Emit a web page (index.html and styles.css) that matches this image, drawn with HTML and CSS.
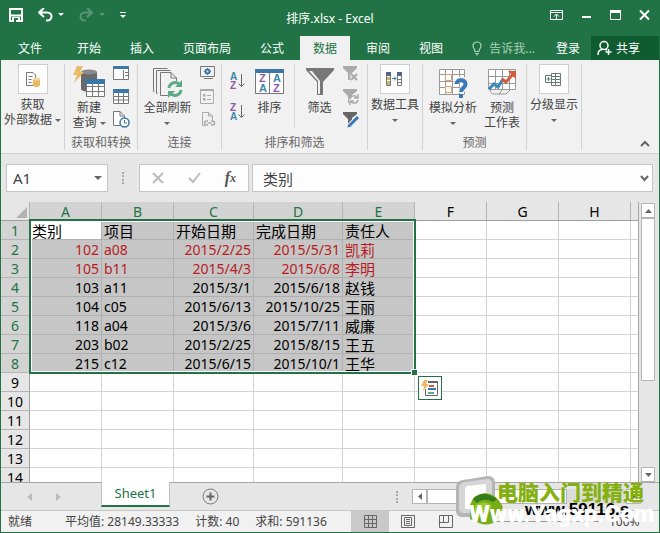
FILE: index.html
```html
<!DOCTYPE html>
<html lang="zh-CN">
<head>
<meta charset="utf-8">
<title>排序.xlsx - Excel</title>
<link rel="stylesheet" href="styles.css">
</head>
<body>
<header class="titlebar">
  <div class="quick">
    <button aria-label="保存"><svg width="14" height="14" viewBox="0 0 14 14"><path d="M1 1h12v12H1zM1 7.500h12M4 13v-3h6v3" fill="none" stroke="#fff" stroke-width="2"/><path d="M5 10h4v2H7v2H5z" fill="#217346"/></svg></button>
    <button aria-label="撤消"><svg width="26" height="14" viewBox="0 0 26 14"><path d="M6 0 1 4.500 6 9M1.500 4.500H9c6 0 6 8 0 8H8" fill="none" stroke="#fff" stroke-width="2"/><path d="M20 5h6l-3 3z" fill="#fff"/></svg></button>
    <button aria-label="恢复" class="dim"><svg width="26" height="14" viewBox="0 0 26 14"><path d="M8 0l5 4.500L8 9M12.500 4.500H6c-6 0-6 8 0 8h1" fill="none" stroke="#fff" stroke-width="2"/><path d="M20 5h6l-3 3z" fill="#fff"/></svg></button>
    <button aria-label="自定义快速访问工具栏"><svg width="6" height="14" viewBox="0 0 6 14"><path d="M0 4h6v1H0zM0 7h6l-3 3z" fill="#fff"/></svg></button>
  </div>
  <h1>排序.xlsx - Excel</h1>
  <div class="winctl">
    <button aria-label="功能区显示选项"><svg width="13" height="12" viewBox="0 0 13 12"><path d="M.5 1.500h12v9H.5zM.5 3.500h12M6.500 10V5M4 7.500 6.500 5 9 7.500" fill="none" stroke="#fff"/></svg></button>
    <button aria-label="最小化"><svg width="11" height="12" viewBox="0 0 11 12"><path d="M1 7h9v2H1z" fill="#fff"/></svg></button>
    <button aria-label="最大化"><svg width="11" height="12" viewBox="0 0 11 12"><path d="M.5 1.500h10v9H.5z" fill="none" stroke="#fff"/><path d="M0 1h11v3H0z" fill="#fff"/></svg></button>
    <button aria-label="关闭"><svg width="11" height="12" viewBox="0 0 11 12"><path d="m1 1.500 9 9m0-9-9 9" stroke="#fff" stroke-width="2"/></svg></button>
  </div>
</header>

<nav class="tabs">
  <button class="file">文件</button>
  <button>开始</button>
  <button>插入</button>
  <button>页面布局</button>
  <button>公式</button>
  <button class="active">数据</button>
  <button>审阅</button>
  <button>视图</button>
  <div class="account">
    <button class="tell"><svg width="10" height="15" viewBox="0 0 10 15"><path d="M3 10.500C3 8 1 7.500 1 4.500 1 2.500 3 1 5 1s4 1.500 4 3.500c0 3-2 3.500-2 6zM3 12.500h4M4 14h2" fill="none" stroke="#a9d2b9" stroke-width="1.200"/></svg>告诉我...</button>
    <button class="login">登录</button>
    <button class="share"><svg width="15" height="16" viewBox="0 0 15 16"><path d="M1 15c0-4 2-5.500 4.500-5.500M11 5.500a4 4 0 1 1-8 0 4 4 0 0 1 8 0zM8.500 9.500l1.500.5M11.500 9v6M8.500 12h6" fill="none" stroke="#fff" stroke-width="1.500"/></svg>共享</button>
  </div>
</nav>

<section class="ribbon" aria-label="数据">
  <div class="group g-external">
    <div class="tools">
      <button class="big boxed"><span class="frame"><svg width="16" height="16" viewBox="0 0 16 16"><path d="M9 14.500H1.500v-13H8l2.500 2.500v3M3.500 5.500h4M3.500 8.500h3M3.500 11.500h3" fill="none" stroke="#777"/><path d="M8 8v6c0 2.500 7 2.500 7 0V8z" fill="#e9b95f"/><ellipse cx="11.500" cy="8" rx="3.500" ry="1.500" fill="#f5d9a0"/></svg></span><span>获取</span><span>外部数据 <i class="caret"></i></span></button>
    </div>
  </div>
  <div class="group g-transform">
    <div class="tools">
      <button class="big"><svg width="32" height="32" viewBox="0 0 32 32"><path d="M8 6v17c0 2 6 3 8 3V14h8V6z" fill="#696969"/><ellipse cx="16" cy="6" rx="8" ry="2.500" fill="#8a8a8a"/><path d="M4 0h6L7 6h4L1 17l3-8H0z" fill="#edb968"/><path d="M13.500 15.500h18v15h-18z" fill="#fff"/><path d="M13.500 20.500h18M13.500 25.500h18M19.500 16v14M25.500 16v14M13.500 15.500h18v15h-18z" fill="none" stroke="#777"/><path d="M13 13h19v5H13z" fill="#3b78a8"/></svg><span>新建</span><span>查询 <i class="caret"></i></span></button>
      <div class="minis">
        <button aria-label="显示查询"><svg width="17" height="17" viewBox="0 0 17 17"><path d="M.5 1.500h15v13H.5z" fill="#fff" stroke="#777"/><path d="M0 1h16v3H0z" fill="#3b78a8"/><path d="M10.500 5v9M12 7.500h3M12 10.500h3" stroke="#777"/></svg></button>
        <button aria-label="从表格"><svg width="17" height="17" viewBox="0 0 17 17"><path d="M.5 1.500h15v14H.5z" fill="#fff"/><path d="M.5 1.500h15v14H.5zM0 8.500h16M0 12h16M5.500 4v12M10.500 4v12" fill="none" stroke="#777"/><path d="M0 1h16v4H0z" fill="#3b78a8"/></svg></button>
        <button aria-label="最近使用的源"><svg width="17" height="17" viewBox="0 0 17 17"><path d="M7 14.500H.5V.5H7L11.500 5v2M7 .5V5h4.500" fill="#fff" stroke="#777"/><circle cx="11.500" cy="11.500" r="4.500" fill="#fff" stroke="#3b78a8" stroke-width="1.500"/><path d="M11.500 9v3H14" fill="none" stroke="#3b78a8"/></svg></button>
      </div>
    </div>
    <h2>获取和转换</h2>
  </div>
  <div class="group g-connect">
    <div class="tools">
      <button class="big"><svg width="32" height="32" viewBox="0 0 32 32"><path d="M3.500 25.500h-1v-23h14M6.500 27.500h-1v-23h14M18 29.500H9.500v-23H20L25.500 12v3M20 6.500V12h5.500" fill="none" stroke="#777"/><path d="M18 22c1-6 8-7 11-3M30 24c-1 6-8 7-11 3" fill="none" stroke="#5ea98a" stroke-width="3"/><path d="M31 14v7h-7zM17 32v-7h7z" fill="#5ea98a"/></svg><span>全部刷新</span><span><i class="caret"></i></span></button>
      <div class="minis">
        <button aria-label="连接"><svg width="17" height="17" viewBox="0 0 17 17"><path d="M1.500 1.500h14v10h-14zM5 13.500h9" fill="none" stroke="#777"/><circle cx="8.500" cy="6.500" r="2" fill="none" stroke="#3b78a8" stroke-width="2"/><path d="M8.500 3v1M8.500 9v1M5 6.500h1M11 6.500h1" stroke="#3b78a8"/></svg></button>
        <button aria-label="属性"><svg width="17" height="17" viewBox="0 0 17 17"><path d="M1.500 1.500h13v14h-13zM1 2.500h14M8 7.500h4M8 11.500h4" fill="none" stroke="#aaa"/><path d="M4 6h2.500v2.500H4zM4 10h2.500v2.500H4z" fill="#aaa"/></svg></button>
        <button aria-label="编辑链接"><svg width="17" height="17" viewBox="0 0 17 17"><path d="M6 14.500H3.500v-13h6L13.500 5v4M9.500 1.500V5h4" fill="none" stroke="#aaa"/><path d="M9 10H7.500a2 2 0 0 0 0 4H9M12 10h1.500a2 2 0 0 1 0 4H12M8.500 12h4" fill="none" stroke="#aaa" stroke-width="1.500"/></svg></button>
      </div>
    </div>
    <h2>连接</h2>
  </div>
  <div class="group g-sort">
    <div class="tools">
      <div class="minis pair">
        <button aria-label="升序"><svg width="16" height="18" viewBox="0 0 16 18"><text x="0" y="8" class="az blue">A</text><text x="0" y="17" class="az violet">Z</text><path d="M11.500 2v12M8.500 11.500l3 3 3-3" fill="none" stroke="#666"/></svg></button>
        <button aria-label="降序"><svg width="16" height="18" viewBox="0 0 16 18"><text x="0" y="8" class="az violet">Z</text><text x="0" y="17" class="az blue">A</text><path d="M11.500 2v12M8.500 11.500l3 3 3-3" fill="none" stroke="#666"/></svg></button>
      </div>
      <button class="big sort"><svg width="30" height="32" viewBox="0 0 30 32"><path d="M.5 3.500h28v24H.5zM14.500 6v22" fill="#fff" stroke="#777"/><path d="M0 3h29v4H0z" fill="#3b78a8"/><text x="4" y="16" class="za violet">Z</text><text x="4" y="26" class="za blue">A</text><text x="18" y="16" class="za blue">A</text><text x="18" y="26" class="za violet">Z</text></svg><span>排序</span></button>
      <button class="big filter"><svg width="28" height="32" viewBox="0 0 28 32"><path d="M0 2h28v2L17 16v13h-6V16L0 4z" fill="#777"/><path d="M3 5l9 10v13h2V15L6 5z" fill="#f1f1f1"/></svg><span>筛选</span></button>
      <div class="minis">
        <button aria-label="清除"><svg width="17" height="17" viewBox="0 0 17 17"><path d="M0 1h14v2L9 8v7H5V8L0 3z" fill="#aaa"/><path d="m8 9 6 6m0-6-6 6" stroke="#f1f1f1" stroke-width="4"/><path d="m8 9 6 6m0-6-6 6" stroke="#aaa" stroke-width="2"/></svg></button>
        <button aria-label="重新应用"><svg width="17" height="17" viewBox="0 0 17 17"><path d="M0 1h14v2L9 7v1l-3 3v4H5V8L0 3z" fill="#aaa"/><path d="M7 11c1-4 6-4 7-1M15 12c-1 4-6 4-7 1M15 6v4h-4M7 17v-4h4" fill="none" stroke="#aaa" stroke-width="1.500"/></svg></button>
        <button aria-label="高级"><svg width="17" height="17" viewBox="0 0 17 17"><path d="M0 1h14v2L9 7v4l-3 3H5V8L0 3z" fill="#666"/><path d="M6 15l8-8" stroke="#f1f1f1" stroke-width="5"/><path d="M7 14l8-8" stroke="#3b78b8" stroke-width="3"/><path d="M4.500 16.500l1-4 3 3z" fill="#3b78b8"/></svg></button>
      </div>
    </div>
    <h2>排序和筛选</h2>
  </div>
  <div class="group g-data">
    <div class="tools">
      <button class="big boxed"><span class="frame"><svg width="17" height="16" viewBox="0 0 17 16"><path d="M.5 1.500h4v13h-4zM11.500 1.500h4v13h-4z" fill="#fff" stroke="#777"/><path d="M0 1h5v4H0zM11 1h5v4h-5z" fill="#55658c"/><path d="M1 6h3v3H1zM1 10h3v4H1z" fill="#c9b56f"/><path d="M12 8.500h4M12 11.500h4" stroke="#777"/><path d="M6 7.500h4M8 5.500l2 2-2 2" fill="none" stroke="#3b78a8"/></svg></span><span>数据工具</span><span><i class="caret"></i></span></button>
    </div>
  </div>
  <div class="group g-forecast">
    <div class="tools">
      <button class="big"><svg width="32" height="32" viewBox="0 0 32 32"><path d="M2.500 3.500h25v25h-25z" fill="#fff"/><path d="M2.500 3.500h25v25h-25zM8.500 3v25M15.500 3v25M22.500 3v25M3 8.500h25M3 15.500h25M3 21.500h25" fill="none" stroke="#999"/><path d="M8.500 8.500h6v6h-6zM8.500 20.500h6v6h-6z" fill="#fff" stroke="#e5a36b"/><path d="M19 18c0-6 10-6 10 0 0 4-5 4-5 9" fill="none" stroke="#f1f1f1" stroke-width="6"/><path d="M19.500 18c0-5 9-5 9 0 0 4-4.500 4-4.500 8" fill="none" stroke="#3b78b8" stroke-width="4"/><path d="M22 28h4v4h-4z" fill="#3b78b8"/></svg><span>模拟分析</span><span><i class="caret"></i></span></button>
      <button class="big"><svg width="30" height="32" viewBox="0 0 30 32"><path d="M1.500 3.500h27v20h-27z" fill="#fff"/><path d="M1.500 23V3.500h27v20H1.500M8.500 3v20M15.500 3v20M22.500 3v20M1 10.500h27M1 17.500h27M3 24c2 4 0 4 9 4l3-4M12 28h7l4-4" fill="none" stroke="#999"/><path d="M2 23l5-5 4 3 5-8" fill="none" stroke="#3b88b8" stroke-width="3"/><path d="M15 13l4 3 8-9" fill="none" stroke="#d05b3d" stroke-width="3"/><path d="M21 5h8v8z" fill="#d05b3d"/></svg><span>预测</span><span>工作表</span></button>
    </div>
    <h2>预测</h2>
  </div>
  <div class="group g-outline">
    <div class="tools">
      <button class="big boxed"><span class="frame"><svg width="17" height="16" viewBox="0 0 17 16"><path d="M6 4.500H.5v7H6M3.500 6v4M1.500 8h4M6.500 2.500h9v12h-9zM10.500 3v11M7 5.500h9M7 8.500h9M7 11.500h9" fill="none" stroke="#667a74"/></svg></span><span>分级显示</span><span><i class="caret"></i></span></button>
    </div>
  </div>
  <button class="collapse" aria-label="折叠功能区"><svg width="10" height="7" viewBox="0 0 10 7"><path d="M1 6l4-4 4 4" fill="none" stroke="#666" stroke-width="2"/></svg></button>
</section>

<section class="formulabar">
  <div class="namebox"><input aria-label="名称框" value="A1"><i class="caret"></i></div>
  <i class="dots"></i>
  <div class="fx">
    <button aria-label="取消"><svg width="12" height="12" viewBox="0 0 12 12"><path d="m1 1 10 10m0-10L1 11" stroke="#bbb" stroke-width="2"/></svg></button>
    <button aria-label="输入"><svg width="13" height="12" viewBox="0 0 13 12"><path d="m1 6 4 4 7-9" fill="none" stroke="#bbb" stroke-width="2"/></svg></button>
    <button aria-label="插入函数" class="fn">f<sub>x</sub></button>
  </div>
  <div class="formula"><input aria-label="编辑栏" value="类别"><svg width="9" height="7" viewBox="0 0 9 7"><path d="m1 1 3.500 4L8 1" fill="none" stroke="#666" stroke-width="2"/></svg></div>
</section>

<main class="sheet">
  <div class="cells">
    <table>
      <colgroup><col class="c-head"><col class="c-std"><col class="c-std"><col class="c-start"><col class="c-end"><col class="c-std"><col class="c-std"><col class="c-std"><col class="c-std"><col></colgroup>
      <thead><tr><th class="corner"><svg width="11" height="11" viewBox="0 0 11 11"><path d="M11 0v11H0z" fill="#b4b4b4"/></svg></th><th class="on">A</th><th class="on">B</th><th class="on">C</th><th class="on">D</th><th class="on">E</th><th>F</th><th>G</th><th>H</th><th></th></tr></thead>
      <tbody>
        <tr class="sel"><th>1</th><td class="current">类别</td><td>项目</td><td>开始日期</td><td>完成日期</td><td>责任人</td><td></td><td></td><td></td><td></td></tr>
        <tr class="sel red"><th>2</th><td class="num">102</td><td class="code">a08</td><td class="num">2015/2/25</td><td class="num">2015/5/31</td><td>凯莉</td><td></td><td></td><td></td><td></td></tr>
        <tr class="sel red"><th>3</th><td class="num">105</td><td class="code">b11</td><td class="num">2015/4/3</td><td class="num">2015/6/8</td><td>李明</td><td></td><td></td><td></td><td></td></tr>
        <tr class="sel"><th>4</th><td class="num">103</td><td class="code">a11</td><td class="num">2015/3/1</td><td class="num">2015/6/18</td><td>赵钱</td><td></td><td></td><td></td><td></td></tr>
        <tr class="sel"><th>5</th><td class="num">104</td><td class="code">c05</td><td class="num">2015/6/13</td><td class="num">2015/10/25</td><td>王丽</td><td></td><td></td><td></td><td></td></tr>
        <tr class="sel"><th>6</th><td class="num">118</td><td class="code">a04</td><td class="num">2015/3/6</td><td class="num">2015/7/11</td><td>威廉</td><td></td><td></td><td></td><td></td></tr>
        <tr class="sel"><th>7</th><td class="num">203</td><td class="code">b02</td><td class="num">2015/2/25</td><td class="num">2015/8/15</td><td>王五</td><td></td><td></td><td></td><td></td></tr>
        <tr class="sel"><th>8</th><td class="num">215</td><td class="code">c12</td><td class="num">2015/6/15</td><td class="num">2015/10/1</td><td>王华</td><td></td><td></td><td></td><td></td></tr>
        <tr><th>9</th><td></td><td></td><td></td><td></td><td></td><td></td><td></td><td></td><td></td></tr>
        <tr><th>10</th><td></td><td></td><td></td><td></td><td></td><td></td><td></td><td></td><td></td></tr>
        <tr><th>11</th><td></td><td></td><td></td><td></td><td></td><td></td><td></td><td></td><td></td></tr>
        <tr><th>12</th><td></td><td></td><td></td><td></td><td></td><td></td><td></td><td></td><td></td></tr>
        <tr><th>13</th><td></td><td></td><td></td><td></td><td></td><td></td><td></td><td></td><td></td></tr>
        <tr><th>14</th><td></td><td></td><td></td><td></td><td></td><td></td><td></td><td></td><td></td></tr>
      </tbody>
    </table>
    <div class="selection"><i class="handle"></i></div>
    <button class="quickanalysis" aria-label="快速分析"><svg width="18" height="18" viewBox="0 0 18 18"><path d="M4.500 10v6.500h12V3M8 2.500h9" fill="none" stroke="#666"/><path d="M7 2h10v2H7z" fill="#666"/><path d="M8 6h5v2H8z" fill="#c55a3d"/><path d="M7 9h8v2H7z" fill="#3b78a8"/><path d="M7 13h6v2H7z" fill="#5ea98a"/><path d="M3 1h4L5 5h3l-6 7 1-5H0z" fill="#edb968"/></svg></button>
  </div>
  <div class="vscroll">
    <button aria-label="向上滚动"><svg width="7" height="4" viewBox="0 0 7 4"><path d="M0 4h7L3.500 0z" fill="#666"/></svg></button>
    <div class="vthumb"></div>
    <button class="down" aria-label="向下滚动"><svg width="7" height="4" viewBox="0 0 7 4"><path d="M0 0h7L3.500 4z" fill="#666"/></svg></button>
  </div>
</main>

<div class="sheetbar">
  <div class="sheetnav">
    <button aria-label="上一个工作表"><svg width="5" height="8" viewBox="0 0 5 8"><path d="M5 0v8L0 4z" fill="#bbb"/></svg></button>
    <button aria-label="下一个工作表"><svg width="5" height="8" viewBox="0 0 5 8"><path d="M0 0v8l5-4z" fill="#bbb"/></svg></button>
  </div>
  <button class="sheettab">Sheet1</button>
  <button class="add" aria-label="新工作表"><svg width="17" height="17" viewBox="0 0 17 17"><circle cx="8.500" cy="8.500" r="7.500" fill="none" stroke="#777"/><path d="M8.500 4.500v8M4.500 8.500h8" stroke="#666" stroke-width="2"/></svg></button>
  <i class="dots"></i>
  <div class="hscroll">
    <button aria-label="向左滚动"><svg width="4" height="7" viewBox="0 0 4 7"><path d="M4 0v7L0 3.500z" fill="#666"/></svg></button>
    <div class="hthumb"></div>
    <button class="right" aria-label="向右滚动"><svg width="4" height="7" viewBox="0 0 4 7"><path d="M0 0v7l4-3.500z" fill="#666"/></svg></button>
  </div>
</div>

<footer class="statusbar">
  <span class="ready">就绪</span>
  <span>平均值: 28149.33333</span>
  <span>计数: 40</span>
  <span>求和: 591136</span>
  <div class="views">
    <button class="on" aria-label="普通"><svg width="13" height="13" viewBox="0 0 13 13"><path d="M.5.5h12v12H.5zM4.500 0v13M8.500 0v13M0 4.500h13M0 8.500h13" fill="none" stroke="#666"/></svg></button>
    <button aria-label="页面布局"><svg width="14" height="13" viewBox="0 0 14 13"><path d="M.5.5h13v12H.5zM3.500 2.500h7v8h-7zM5 4.500h4M5 6.500h4M5 8.500h4" fill="none" stroke="#666"/></svg></button>
    <button aria-label="分页预览"><svg width="14" height="13" viewBox="0 0 14 13"><path d="M.5.5h13v12H.5zM4.500 0v7.500H.5M9.500 0v7.500h-5" fill="none" stroke="#666"/></svg></button>
    <span class="slider"></span>
    <span class="zoom">100%</span>
  </div>
</footer>

<div class="watermark">
  <svg width="48" height="50" viewBox="0 0 48 50"><path d="M7 4 32 0q7 0 7 7v22q-2 12-14 12H5q-5-1-5-6V11q0-6 7-7z" fill="#b5b5b5"/><path d="M9 6 31 3q5 0 5 5v18q-1 11-12 11H8q-5 0-5-5V12q0-5 6-6z" fill="#d6d6d6"/><path d="M11 10l19-2v25H9V13q0-2 2-3z" fill="#fff"/><path d="M14 43V29q3-11 15-12 12 1 18 14l-7 14q-8 6-17 2z" fill="#77ad16"/><path d="M17 23q10-10 24 0l-4 3q-9-5-16 1z" fill="#377d1c"/><path d="M19 29q10-6 17 1l-6 12-11-2z" fill="#95c72c"/></svg>
  <div class="wm-title">电脑入门到精通</div>
  <div class="wm-url">www.59116.s</div>
  <div class="wm-site">Www.Yagxp.Com</div>
</div>
</body>
</html>
```
FILE: styles.css
```css
* { box-sizing: border-box; }

body {
  margin: 0;
  height: 100vh;
  display: flex;
  flex-direction: column;
  overflow: hidden;
  position: relative;
  background: #e6e6e6;
  border: 1px solid #217346;
  border-top: 0;
  color: #444;
  font: 12px/15px "Noto Sans", "Noto Sans CJK SC", sans-serif;
}

button, input {
  font: inherit;
  color: inherit;
  background: none;
  border: 0;
  padding: 0;
  margin: 0;
}

button {
  display: flex;
  align-items: center;
  justify-content: center;
  white-space: nowrap;
}

svg { display: block; flex: none; }
h1, h2 { margin: 0; font-size: 12px; font-weight: 400; }

.caret {
  display: inline-block;
  border: 3px solid transparent;
  border-top-color: #666;
  border-bottom: 0;
  vertical-align: middle;
}

.dots { width: 3px; height: 12px; border-left: 2px dotted #aaa; }

/* Title bar */
.titlebar {
  flex: none;
  height: 36px;
  display: grid;
  grid-template-columns: 1fr auto 1fr;
  background: #217346;
  color: #fff;
}
.quick { display: flex; gap: 15px; padding: 8px 0 0 8px; align-items: flex-start; }
.quick .dim { opacity: .25; }
.titlebar h1 { padding-top: 11px; }
.winctl { display: flex; justify-content: flex-end; align-items: flex-start; gap: 18px; padding: 9px 9px 0 0; }

/* Ribbon tabs */
.tabs {
  flex: none;
  height: 24px;
  display: flex;
  gap: 3px;
  background: #217346;
  color: #fff;
}
.tabs button { padding: 0 13px; }
.tabs .file { padding: 0 19px 0 17px; }
.tabs .active { background: #f1f1f1; color: #217346; }
.account { display: flex; margin-left: auto; }
.account .tell { gap: 7px; padding: 0 10px; color: #a9d2b9; }
.account .login { padding: 0 11px; }
.account .share { gap: 4px; padding: 0 19px 0 6px; background: #0f5c30; }

/* Ribbon */
.ribbon {
  flex: none;
  height: 94px;
  display: flex;
  padding: 4px 0 3px;
  background: #f1f1f1;
  border-bottom: 1px solid #d2d2d2;
}
.group {
  flex: none;
  display: flex;
  flex-direction: column;
  justify-content: space-between;
  border-right: 1px solid #d2d2d2;
}
.g-external { width: 64px; }
.g-transform { width: 73px; }
.g-connect { width: 84px; }
.g-sort { width: 146px; }
.g-data { width: 55px; }
.g-forecast { width: 104px; }
.g-outline { width: 55px; }
.group h2 { text-align: center; color: #666; line-height: 14px; }
.tools { display: flex; justify-content: center; gap: 7px; }
.big { flex-direction: column; justify-content: flex-start; padding-top: 2px; }
.big svg { margin-bottom: 2px; }
.big.boxed { padding-top: 0; }
.big .frame {
  width: 30px;
  height: 30px;
  margin-bottom: 3px;
  display: grid;
  place-items: center;
  background: #fdfdfd;
  border: 1px solid #cfcfcf;
}
.big .frame svg { margin: 0; }
.minis { display: flex; flex-direction: column; gap: 6px; padding-top: 1px; }
.minis.pair { gap: 13px; padding-top: 8px; }
.g-sort .tools { gap: 9px; }
.g-sort .filter { padding-left: 11px; border-left: 1px solid #d8d8d8; }
.az { font: bold 10px "Liberation Sans", sans-serif; }
.za { font: bold 11px "Liberation Sans", sans-serif; }
.blue { fill: #3b88a8; }
.violet { fill: #8b5aa5; }
.collapse { margin-left: auto; align-self: flex-end; padding: 0 9px 3px; }

/* Formula bar */
.formulabar {
  flex: none;
  display: flex;
  align-items: center;
  padding: 10px 6px 10px 5px;
  height: 48px;
  font-size: 15px;
}
.formulabar > div {
  height: 28px;
  display: flex;
  align-items: center;
  background: #fdfdfd;
  border: 1px solid #c6c6c6;
}
.formulabar input { flex: 1; min-width: 0; outline: 0; }
.namebox { width: 102px; padding: 0 5px 0 6px; }
.namebox .caret { border-width: 4px 4px 0; }
.formulabar .dots { margin: 0 14px; }
.fx { width: 110px; justify-content: space-between; padding: 0 12px; }
.fn { font: italic bold 16px/16px "Liberation Serif", serif; color: #555; }
.fn sub { font-size: 12px; line-height: 0; }
.formula { flex: 1; margin-left: 3px; padding: 0 3px 0 10px; }

/* Worksheet grid */
.sheet { flex: 1; min-height: 0; display: flex; }
.cells {
  flex: 1;
  min-width: 0;
  position: relative;
  overflow: hidden;
  border-right: 1px solid #a6a6a6;
}
table { width: 100%; table-layout: fixed; border-collapse: separate; border-spacing: 0; }
.c-head { width: 29px; }
.c-std { width: 72px; }
.c-start { width: 80px; }
.c-end { width: 89px; }
th, td {
  height: 19px;
  padding: 2px 2px 0;
  font-size: 15px;
  line-height: 16px;
  font-weight: 400;
  white-space: nowrap;
  overflow: hidden;
  border-right: 1px solid #d4d4d4;
  border-bottom: 1px solid #d4d4d4;
  color: #000;
}
th { font-size: 14px; background: #e6e6e6; text-align: center; padding: 2px 0 0; }
thead th { border-color: #b4b4b4; border-bottom-color: #a0a0a0; }
thead th:last-child { border-right: 0; }
tbody th { border-right-color: #a0a0a0; border-bottom-color: #b4b4b4; }
th.on, .sel th { background: #d3d3d3; color: #217346; }
.corner svg { margin-left: 15px; }
td { background: #fff; text-align: left; }
td:last-child { border-right: 0; }
.sel td:nth-child(-n+6) { background: #c6c6c6; border-color: #b0b0b0; }
.sel td.current { background: #fff; }
.red td { color: #b81c22; }
td.num, td.code { font-size: 14px; }
td.num { text-align: right; }

.selection {
  position: absolute;
  left: 28px;
  top: 17px;
  width: 387px;
  height: 155px;
  border: 2px solid #217346;
  box-shadow: inset 0 0 0 1px #fff;
  pointer-events: none;
}
.handle {
  position: absolute;
  right: -3px;
  bottom: -3px;
  width: 5px;
  height: 5px;
  background: #217346;
  outline: 1px solid #fff;
}
.quickanalysis {
  position: absolute;
  left: 417px;
  top: 174px;
  width: 24px;
  height: 24px;
  background: #fff;
  border: 1px solid #217346;
}

.vscroll { width: 20px; padding: 1px 4px 0 2px; display: flex; flex-direction: column; }
.vscroll button { height: 15px; background: #fff; border: 1px solid #b4b4b4; }
.vthumb { height: 163px; background: #fff; border: 1px solid #b4b4b4; }
.vscroll .down { margin-top: auto; }

/* Sheet tabs */
.sheetbar {
  flex: none;
  height: 28px;
  display: flex;
  align-items: center;
  border-top: 1px solid #a6a6a6;
}
.sheetnav { width: 100px; display: flex; gap: 24px; padding-left: 26px; }
.sheettab {
  align-self: flex-start;
  height: 25px;
  margin-top: -1px;
  width: 69px;
  background: #fff;
  border: 1px solid #c0c0c0;
  border-top: 0;
  border-bottom: 2px solid #217346;
  color: #217346;
  font-size: 13px;
}
.add { margin-left: 32px; }
.sheetbar .dots { margin-left: auto; }
.hscroll { display: flex; margin: 0 18px 0 13px; width: 229px; background: #dcdcdc; }
.hscroll button, .hthumb { width: 15px; height: 15px; background: #fff; border: 1px solid #b4b4b4; }
.hthumb { width: 140px; }
.hscroll .right { margin-left: auto; }

/* Status bar */
.statusbar {
  flex: none;
  height: 22px;
  display: flex;
  align-items: center;
  gap: 16px;
  padding-left: 7px;
  background: #f1f1f1;
  border-top: 1px solid #c6c6c6;
}
.ready { margin-right: 17px; }
.views { display: flex; align-items: center; margin-left: auto; height: 100%; }
.views button { width: 38px; height: 100%; }
.views .on { background: #c9c9c9; }
.slider { width: 124px; height: 1px; margin: 0 10px; background: #999; }
.zoom { width: 50px; }

/* Site stamp over the lower right corner */
.watermark { position: absolute; right: 0; bottom: 6px; width: 203px; height: 50px; white-space: nowrap; }
.watermark > * { position: absolute; }
.wm-title { left: 41px; top: 4px; color: #84b010; font: 900 21px/22px "Noto Sans CJK SC", sans-serif; }
.wm-url { left: 69px; top: 25px; color: #000; font: bold 17px/18px "Liberation Sans", sans-serif; }
.wm-site { left: 13px; top: 25px; color: #fff; font: 900 24px/26px Roboto, sans-serif; }
```
